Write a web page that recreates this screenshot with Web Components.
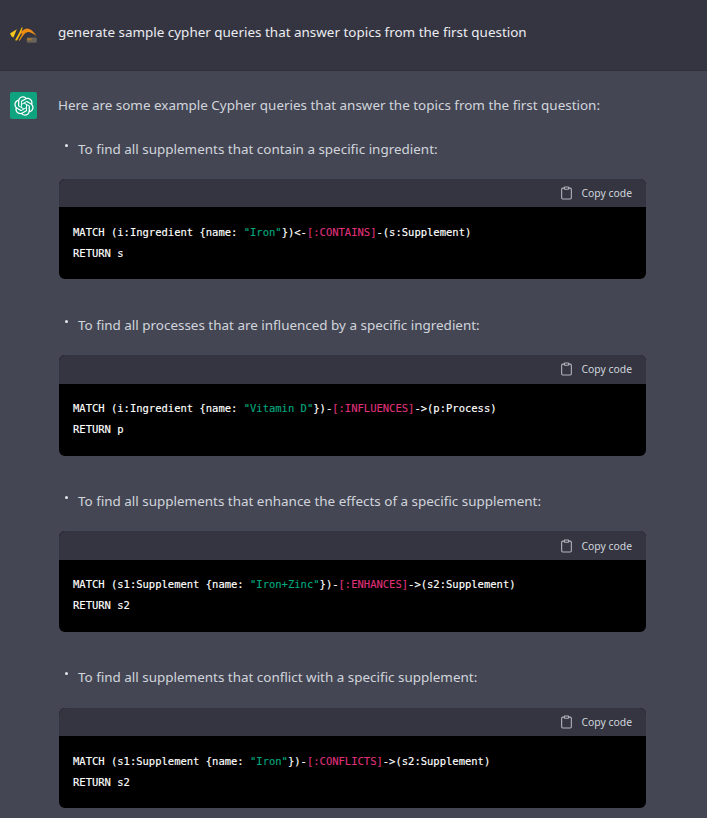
<!DOCTYPE html>
<html>
<head>
<meta charset="utf-8">
<style>
  html, body { margin: 0; padding: 0; background: #444654; }
  body { font-family: "Noto Sans", "Open Sans", sans-serif; height: 818px; overflow: hidden; }
</style>
</head>
<body>
<chat-prompt>generate sample cypher queries that answer topics from the first question</chat-prompt>
<chat-answer>
  <p slot="intro">Here are some example Cypher queries that answer the topics from the first question:</p>

  <query-item label="To find all supplements that contain a specific ingredient:">
    <span>MATCH (i:Ingredient {name: <s-str>"Iron"</s-str>})&lt;-<s-rel>[:CONTAINS]</s-rel>-(s:Supplement)</span>
    <span>RETURN s</span>
  </query-item>

  <query-item label="To find all processes that are influenced by a specific ingredient:">
    <span>MATCH (i:Ingredient {name: <s-str>"Vitamin D"</s-str>})-<s-rel>[:INFLUENCES]</s-rel>-&gt;(p:Process)</span>
    <span>RETURN p</span>
  </query-item>

  <query-item label="To find all supplements that enhance the effects of a specific supplement:">
    <span>MATCH (s1:Supplement {name: <s-str>"Iron+Zinc"</s-str>})-<s-rel>[:ENHANCES]</s-rel>-&gt;(s2:Supplement)</span>
    <span>RETURN s2</span>
  </query-item>

  <query-item label="To find all supplements that conflict with a specific supplement:">
    <span>MATCH (s1:Supplement {name: <s-str>"Iron"</s-str>})-<s-rel>[:CONFLICTS]</s-rel>-&gt;(s2:Supplement)</span>
    <span>RETURN s2</span>
  </query-item>
</chat-answer>

<script>
const GPT_PATH = 'M37.5324 16.8707C37.9808 15.5241 38.1363 14.0974 37.9886 12.6859C37.8409 11.2744 37.3934 9.91076 36.676 8.68622C35.6126 6.83404 33.9882 5.3676 32.0373 4.4985C30.0864 3.62941 27.9098 3.40259 25.8215 3.85078C24.8796 2.7893 23.7219 1.94125 22.4257 1.36341C21.1295 0.785575 19.7249 0.491269 18.3058 0.500197C16.1708 0.495044 14.0893 1.16803 12.3614 2.42214C10.6335 3.67624 9.34853 5.44666 8.6917 7.47815C7.30085 7.76286 5.98686 8.3414 4.8377 9.17505C3.68854 10.0087 2.73073 11.0782 2.02839 12.312C0.956464 14.1591 0.498905 16.2988 0.721698 18.4228C0.944492 20.5467 1.83612 22.5449 3.268 24.1293C2.81966 25.4759 2.66413 26.9026 2.81182 28.3141C2.95951 29.7256 3.40701 31.0892 4.12437 32.3138C5.18791 34.1659 6.8123 35.6322 8.76321 36.5013C10.7141 37.3704 12.8907 37.5973 14.9789 37.1492C15.9208 38.2107 17.0786 39.0587 18.3747 39.6366C19.6709 40.2144 21.0755 40.5087 22.4946 40.4998C24.6307 40.5054 26.7133 39.8321 28.4418 38.5772C30.1704 37.3223 31.4556 35.5506 32.1119 33.5179C33.5027 33.2332 34.8167 32.6547 35.9659 31.821C37.115 30.9874 38.0728 29.9178 38.7752 28.684C39.8458 26.8371 40.3023 24.6979 40.0789 22.5748C39.8556 20.4517 38.9639 18.4544 37.5324 16.8707ZM22.4978 37.8849C20.7443 37.8874 19.0459 37.2733 17.6994 36.1501C17.7601 36.117 17.8666 36.0586 17.936 36.0161L25.9004 31.4156C26.1003 31.3019 26.2663 31.137 26.3813 30.9378C26.4964 30.7386 26.5563 30.5124 26.5549 30.2825V19.0542L29.9213 20.998C29.9389 21.0068 29.9541 21.0198 29.9656 21.0359C29.977 21.052 29.9842 21.0707 29.9867 21.0902V30.3889C29.9842 32.375 29.1946 34.2791 27.7909 35.6841C26.3872 37.0892 24.4838 37.8806 22.4978 37.8849ZM6.39227 31.0064C5.51397 29.4888 5.19742 27.7107 5.49804 25.9832C5.55718 26.0187 5.66048 26.0818 5.73461 26.1244L13.699 30.7248C13.8975 30.8408 14.1233 30.902 14.3532 30.902C14.583 30.902 14.8088 30.8408 15.0073 30.7248L24.731 25.1103V28.9979C24.7321 29.0177 24.7283 29.0376 24.7199 29.0556C24.7115 29.0736 24.6988 29.0893 24.6829 29.1012L16.6317 33.7497C14.9096 34.7416 12.8643 35.0097 10.9447 34.4954C9.02506 33.9811 7.38785 32.7263 6.39227 31.0064ZM4.29707 13.6194C5.17156 12.0998 6.55279 10.9364 8.19885 10.3327C8.19885 10.4013 8.19491 10.5228 8.19491 10.6071V19.808C8.19351 20.0378 8.25334 20.2638 8.36823 20.4629C8.48312 20.6619 8.64893 20.8267 8.84863 20.9404L18.5723 26.5542L15.206 28.4979C15.1894 28.5089 15.1703 28.5155 15.1505 28.5173C15.1307 28.5191 15.1107 28.516 15.0924 28.5082L7.04046 23.8557C5.32135 22.8601 4.06716 21.2235 3.55289 19.3046C3.03862 17.3858 3.30624 15.3413 4.29707 13.6194ZM31.955 20.0556L22.2312 14.4411L25.5976 12.4981C25.6142 12.4872 25.6333 12.4805 25.6531 12.4787C25.6729 12.4769 25.6928 12.4801 25.7111 12.4879L33.7631 17.1364C34.9967 17.849 36.0017 18.8982 36.6606 20.1613C37.3194 21.4244 37.6047 22.849 37.4832 24.2684C37.3617 25.6878 36.8382 27.0432 35.9743 28.1759C35.1103 29.3086 33.9415 30.1717 32.6047 30.6641C32.6047 30.5947 32.6047 30.4733 32.6047 30.3889V21.188C32.6066 20.9586 32.5474 20.7328 32.4332 20.5338C32.319 20.3348 32.154 20.1698 31.955 20.0556ZM35.3055 15.0128C35.2464 14.9765 35.1431 14.9142 35.069 14.8717L27.1045 10.2712C26.906 10.1554 26.6803 10.0943 26.4504 10.0943C26.2206 10.0943 25.9948 10.1554 25.7963 10.2712L16.0726 15.8858V11.9982C16.0715 11.9783 16.0753 11.9585 16.0837 11.9405C16.0921 11.9225 16.1048 11.9068 16.1207 11.8949L24.1719 7.25025C25.4053 6.53903 26.8158 6.19376 28.2383 6.25482C29.6608 6.31589 31.0364 6.78077 32.2044 7.59508C33.3723 8.40939 34.2842 9.53945 34.8334 10.8531C35.3826 12.1667 35.5464 13.6095 35.3055 15.0128ZM14.2424 21.9419L10.8752 19.9981C10.8576 19.9893 10.8423 19.9763 10.8309 19.9602C10.8195 19.9441 10.8122 19.9254 10.8098 19.9058V10.6071C10.8107 9.18295 11.2173 7.78848 11.9819 6.58696C12.7466 5.38544 13.8377 4.42659 15.1275 3.82264C16.4173 3.21869 17.8524 2.99464 19.2649 3.1767C20.6775 3.35876 22.0089 3.93941 23.1034 4.85067C23.0427 4.88379 22.937 4.94215 22.8668 4.98473L14.9024 9.58517C14.7025 9.69878 14.5366 9.86356 14.4215 10.0626C14.3065 10.2616 14.2466 10.4877 14.2479 10.7175L14.2424 21.9419ZM16.071 17.9991L20.4018 15.4978L24.7325 17.9975V22.9985L20.4018 25.4983L16.071 22.9985V17.9991Z';

class ChatPrompt extends HTMLElement {
    constructor() {
        super();
        const shadow = this.attachShadow({ mode: 'open' });
        shadow.innerHTML = `
        <style>
            :host {
                display: flex;
                box-sizing: border-box;
                height: 71px;
                padding: 0 10px;
                gap: 21px;
                align-items: center;
                background: #343541;
                border-bottom: 1px solid #2f3039;
                color: #ececf1;
                font-size: 13.45px;
            }
            svg { width: 27px; height: 27px; flex: none; }
            .text { position: relative; top: -3px; }
        </style>
        <svg viewBox="0 0 27 27">
            <path d="M0 11.4 L6.8 7.2 L3.4 15.4 L1.6 14.4 Z" fill="#f7c91a"/>
            <path d="M5 18.2 L9 11 L11.8 5.2 L12.6 5.6 L11.4 10.4 L7 18.4 Z" fill="#f5bb10"/>
            <path d="M10 11.6 C12 8.6 14.5 6.4 17 6.4 C20.5 6.4 24 10 26.8 14 C23.5 11.8 20.5 10 18 10 C15.5 10.2 13.4 13 9.6 18.9 L8.9 18 L12.4 11.6 Z" fill="#ee8c13"/>
            <rect x="16.8" y="15.6" width="10" height="5.2" rx="1" fill="#67625a"/>
            <rect x="17.2" y="16.2" width="4.4" height="2.2" fill="#a9772f"/>
        </svg>
        <span class="text"><slot></slot></span>
        `;
    }
}

class ChatAnswer extends HTMLElement {
    constructor() {
        super();
        const shadow = this.attachShadow({ mode: 'open' });
        shadow.innerHTML = `
        <style>
            :host {
                display: flex;
                gap: 21px;
                padding: 21px 61px 0 10px;
                color: #d1d5db;
                font-size: 13.45px;
            }
            .avatar {
                flex: none;
                width: 27px;
                height: 27px;
                border-radius: 2px;
                background: #10a37f;
                display: flex;
                align-items: center;
                justify-content: center;
            }
            .avatar svg { width: 20px; height: 20px; }
            .content { flex: 1; min-width: 0; display: flex; flex-direction: column; }
            ::slotted(p) { margin: 3px 0 22.55px; line-height: 21px; }
        </style>
        <div class="avatar">
            <svg viewBox="0 0 41 41"><path fill="#fff" d="${GPT_PATH}"/></svg>
        </div>
        <div class="content">
            <slot name="intro"></slot>
            <slot></slot>
        </div>
        `;
    }
}

class QueryItem extends HTMLElement {
    constructor() {
        super();
        const shadow = this.attachShadow({ mode: 'open' });
        shadow.innerHTML = `
        <style>
            :host { display: block; margin-bottom: 35.35px; }
            .label { display: flex; height: 21px; line-height: 21px; margin: 0 0 19.15px 0; padding-left: 7px; }
            .dot { width: 3px; height: 3px; margin: 5px 10px 0 0; border-radius: 50%; background: #e5e7eb; flex: none; }
            .block { margin-left: 1px; border-radius: 6px; overflow: hidden; background: #000; }
            .bar {
                display: flex;
                align-items: center;
                justify-content: flex-end;
                gap: 8px;
                box-sizing: border-box;
                height: 28.8px;
                padding: 0 14px 0.1px;
                background: #343541;
                color: #d1d5db;
                font-size: 10.4px;
            }
            .bar svg { width: 13px; height: 14px; }
            .code {
                display: flex;
                flex-direction: column;
                padding: 14.25px 14px 15.75px;
                font-family: "DejaVu Sans Mono", monospace;
                font-size: 10.5px;
                line-height: 21px;
                color: #fff;
                -webkit-text-stroke: 0.15px currentColor;
            }
            ::slotted(span) { display: block; white-space: pre; }
        </style>
        <div class="label"><span class="dot"></span><span class="txt"></span></div>
        <div class="block">
            <div class="bar">
                <svg viewBox="0 0 24 26" fill="none" stroke="#b4b6bd" stroke-width="2" stroke-linecap="round" stroke-linejoin="round">
                    <path d="M16 4h3a2 2 0 0 1 2 2v16a2 2 0 0 1-2 2H5a2 2 0 0 1-2-2V6a2 2 0 0 1 2-2h3"/>
                    <rect x="8" y="2" width="8" height="4" rx="1" ry="1"/>
                </svg>
                <span>Copy code</span>
            </div>
            <div class="code"><slot></slot></div>
        </div>
        `;
    }

    connectedCallback() {
        this.shadowRoot.querySelector('.txt').textContent = this.getAttribute('label');
    }
}

// coloured tokens inside the code
class TokenStr extends HTMLElement {
    constructor() {
        super();
        this.attachShadow({ mode: 'open' }).innerHTML = `<style>:host { color: #00a67d; }</style><slot></slot>`;
    }
}
class TokenRel extends HTMLElement {
    constructor() {
        super();
        this.attachShadow({ mode: 'open' }).innerHTML = `<style>:host { color: #df3079; }</style><slot></slot>`;
    }
}

customElements.define('chat-prompt', ChatPrompt);
customElements.define('chat-answer', ChatAnswer);
customElements.define('query-item', QueryItem);
customElements.define('s-str', TokenStr);
customElements.define('s-rel', TokenRel);
</script>
</body>
</html>
